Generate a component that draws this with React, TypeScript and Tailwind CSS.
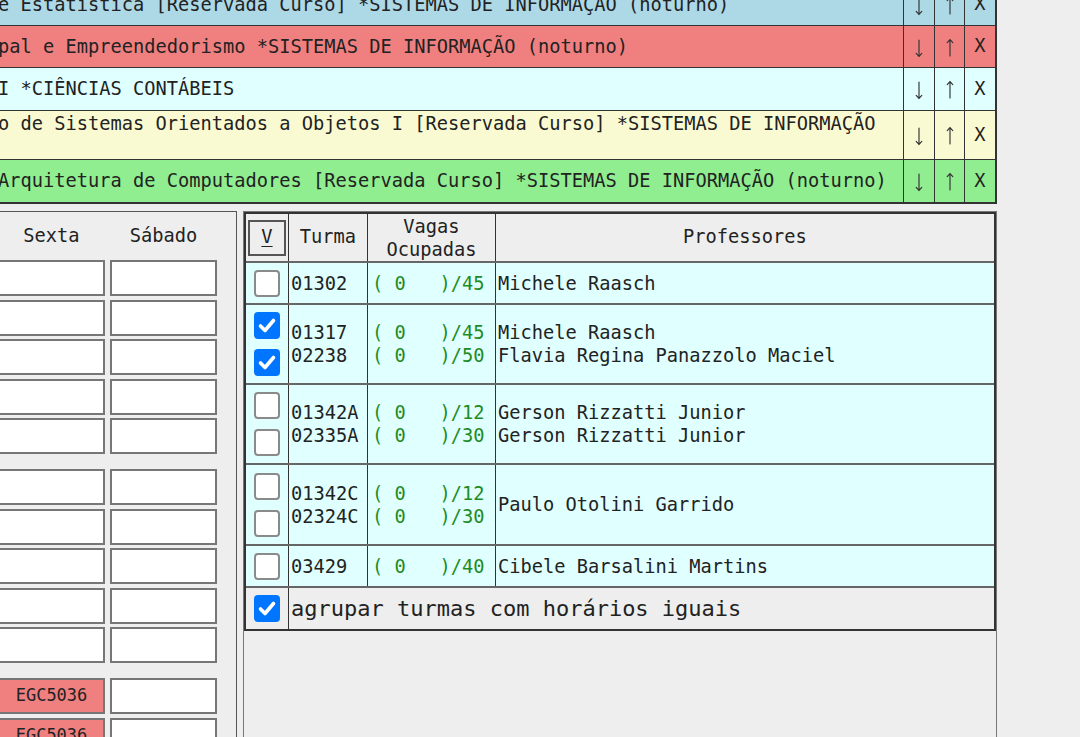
import { Fragment } from "react";

type Disciplina = { texto: string; cor: string; altura: string; linhas?: number };

const disciplinas: Disciplina[] = [
  { texto: "e Estatística [Reservada Curso] *SISTEMAS DE INFORMAÇÃO (noturno)", cor: "bg-[#add8e6]", altura: "h-[42px]" },
  { texto: "pal e Empreendedorismo *SISTEMAS DE INFORMAÇÃO (noturno)", cor: "bg-[#f08080]", altura: "h-[42px]" },
  { texto: "I *CIÊNCIAS CONTÁBEIS", cor: "bg-[#e0ffff]", altura: "h-[43px]" },
  { texto: "o de Sistemas Orientados a Objetos I [Reservada Curso] *SISTEMAS DE INFORMAÇÃO", cor: "bg-[#fafad2]", altura: "h-[49px]", linhas: 2 },
  { texto: "Arquitetura de Computadores [Reservada Curso] *SISTEMAS DE INFORMAÇÃO (noturno)", cor: "bg-[#90ee90]", altura: "h-[44px] border-b-2" },
];

type Turma = { codigo: string; vagas: string; marcado: boolean };
type Grupo = { turmas: Turma[]; professores: string[]; altura: string };

const grupos: Grupo[] = [
  { turmas: [{ codigo: "01302", vagas: "( 0   )/45", marcado: false }], professores: ["Michele Raasch"], altura: "h-[42px]" },
  {
    turmas: [
      { codigo: "01317", vagas: "( 0   )/45", marcado: true },
      { codigo: "02238", vagas: "( 0   )/50", marcado: true },
    ],
    professores: ["Michele Raasch", "Flavia Regina Panazzolo Maciel"],
    altura: "h-[80px]",
  },
  {
    turmas: [
      { codigo: "01342A", vagas: "( 0   )/12", marcado: false },
      { codigo: "02335A", vagas: "( 0   )/30", marcado: false },
    ],
    professores: ["Gerson Rizzatti Junior", "Gerson Rizzatti Junior"],
    altura: "h-[80px]",
  },
  {
    turmas: [
      { codigo: "01342C", vagas: "( 0   )/12", marcado: false },
      { codigo: "02324C", vagas: "( 0   )/30", marcado: false },
    ],
    professores: ["Paulo Otolini Garrido"],
    altura: "h-[81px]",
  },
  { turmas: [{ codigo: "03429", vagas: "( 0   )/40", marcado: false }], professores: ["Cibele Barsalini Martins"], altura: "h-[42px]" },
];

// blocos de horários (5 + 5 + 2 visíveis)
const blocos: string[][][] = [
  [["", ""], ["", ""], ["", ""], ["", ""], ["", ""]],
  [["", ""], ["", ""], ["", ""], ["", ""], ["", ""]],
  [["EGC5036", ""], ["EGC5036", ""]],
];

function Checkbox({ marcado }: { marcado: boolean }) {
  if (marcado) {
    return (
      <span className="flex w-[26px] h-[27px] rounded-[4px] bg-[#0075ff] items-center justify-center">
        <svg width="26" height="27" viewBox="0 0 26 27">
          <path d="M6.5 14 L11 18.5 L19.5 8.5" fill="none" stroke="white" strokeWidth="3.6" strokeLinecap="round" strokeLinejoin="round" />
        </svg>
      </span>
    );
  }
  return <span className="block w-[26px] h-[27px] rounded-[4px] border-2 border-[#8a8a8a] bg-white" />;
}

function Seta({ sobe }: { sobe?: boolean }) {
  return (
    <svg width="12" height="22" viewBox="0 0 12 22" className={sobe ? "rotate-180" : ""}>
      <path d="M6 3 V19.5 M3.2 16.4 L6 19.5 L8.8 16.4" fill="none" stroke="#333" strokeWidth="1.15" strokeLinecap="round" />
    </svg>
  );
}

export default function App() {
  return (
    <div className="w-[1080px] h-[737px] overflow-hidden bg-[#eeeeee] text-[#222] font-['DejaVu_Sans_Mono','Liberation_Mono',monospace] text-[18.7px]">
      {/* Disciplinas selecionadas */}
      <div className="w-[997px] mt-[-16px] border-r-2 border-[#333]">
        {disciplinas.map((d, i) => (
          <div key={i} className={`flex ${d.cor} ${d.altura} border-b border-[#333]`}>
            <div className="flex-1 flex flex-col justify-center overflow-hidden whitespace-nowrap leading-[22px]">
              <span className="ml-[-2px]">{d.texto}</span>
              {d.linhas === 2 && <span>&nbsp;</span>}
            </div>
            <div className="w-[31px] border-l border-[#333] flex items-center justify-center pt-[2px]">
              <Seta />
            </div>
            <div className="w-[30px] border-l border-[#333] flex items-center justify-center pt-[2px]">
              <Seta sobe />
            </div>
            <div className="w-[31px] border-l border-[#333] flex items-center justify-center">X</div>
          </div>
        ))}
      </div>

      <div className="flex mt-[7px] h-[540px]">
        {/* Grade de horários */}
        <div className="w-[247px] ml-[-10px] border-t border-r border-[#555] pl-[8px] pr-[19px]">
          <div className="grid grid-cols-[107px_107px] gap-x-[5px] h-[48px] items-center">
            <span className="text-center">Sexta</span>
            <span className="text-center">Sábado</span>
          </div>
          <div className="flex flex-col gap-[14.6px]">
            {blocos.map((bloco, b) => (
              <div key={b} className="flex flex-col gap-[3.6px]">
                {bloco.map((linha, l) => (
                  <div key={l} className="grid grid-cols-[107px_107px] gap-x-[5px]">
                    {linha.map((cel, c) => (
                      <div
                        key={c}
                        className={`h-[36px] border-2 border-[#767676] flex items-center justify-center text-[17px] ${cel ? "bg-[#f08080]" : "bg-white"}`}
                      >
                        {cel}
                      </div>
                    ))}
                  </div>
                ))}
              </div>
            ))}
          </div>
        </div>

        {/* Turmas */}
        <div className="w-[754px] ml-[6px] border-t border-x border-[#777] h-full">
          <div className="border-2 border-[#333]">
            <div className="flex h-[49px] border-b-2 border-[#666]">
              <div className="w-[43px] border-r border-[#333] flex items-center justify-center">
                <span className="w-[38px] h-[36px] border-2 border-[#555] flex items-center justify-center underline underline-offset-[3px]">V</span>
              </div>
              <div className="w-[79px] border-r border-[#333] flex items-center justify-center">Turma</div>
              <div className="w-[128px] border-r border-[#333] flex flex-col items-center justify-center leading-[23px]">
                <span>Vagas</span>
                <span>Ocupadas</span>
              </div>
              <div className="flex-1 flex items-center justify-center">Professores</div>
            </div>

            {grupos.map((g, i) => (
              <div key={i} className={`flex ${g.altura} bg-[#e0ffff] border-b-2 border-[#666]`}>
                <div className="w-[43px] border-r border-[#333] flex flex-col items-center justify-center gap-[10px]">
                  {g.turmas.map((t) => (
                    <Checkbox key={t.codigo} marcado={t.marcado} />
                  ))}
                </div>
                <div className="w-[79px] border-r border-[#333] flex flex-col justify-center pl-[2px] leading-[23px]">
                  {g.turmas.map((t) => (
                    <span key={t.codigo}>{t.codigo}</span>
                  ))}
                </div>
                <div className="w-[128px] border-r border-[#333] flex flex-col justify-center pl-[4px] leading-[23px] text-[#1e8c1e] whitespace-pre">
                  {g.turmas.map((t) => (
                    <span key={t.codigo}>{t.vagas}</span>
                  ))}
                </div>
                <div className="flex-1 flex flex-col justify-center pl-[2px] leading-[23px]">
                  {g.professores.map((p, j) => (
                    <Fragment key={j}>
                      <span>{p}</span>
                    </Fragment>
                  ))}
                </div>
              </div>
            ))}

            <div className="flex h-[41px]">
              <div className="w-[43px] border-r border-[#333] flex items-center justify-center">
                <Checkbox marcado={true} />
              </div>
              <div className="flex-1 flex items-center pl-[2px] text-[22px]">agrupar turmas com horários iguais</div>
            </div>
          </div>
        </div>
      </div>
    </div>
  );
}
